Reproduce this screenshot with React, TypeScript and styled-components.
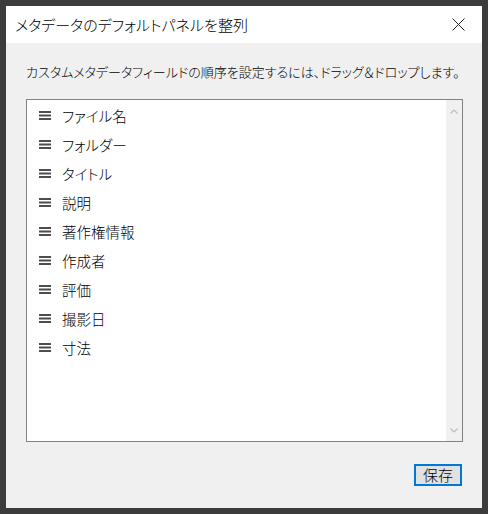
import React from "react";
import styled, { createGlobalStyle } from "styled-components";

const GlobalStyle = createGlobalStyle`
  html, body {
    margin: 0;
    padding: 0;
    background: #3c3c3c;
  }
  * { box-sizing: border-box; }
`;

const Frame = styled.div`
  width: 488px;
  height: 514px;
  padding: 6px;
  background: #3c3c3c;
  font-family: "Noto Sans CJK JP", "Noto Sans", sans-serif;
  font-feature-settings: "palt";
  font-weight: 300;
  color: #000;
`;

const Dialog = styled.div`
  display: flex;
  flex-direction: column;
  height: 100%;
  background: #f0f0f0;
`;

const TitleBar = styled.div`
  display: flex;
  align-items: center;
  height: 37px;
  background: #ffffff;
  padding-left: 9px;
`;

const Title = styled.div`
  flex: 1;
  font-size: 15px;
  line-height: 20px;
`;

const CloseButton = styled.div`
  width: 46px;
  height: 37px;
  display: flex;
  align-items: center;
  justify-content: center;
  padding-right: 2px;
`;

const Body = styled.div`
  flex: 1;
  display: flex;
  flex-direction: column;
  padding: 0 19px 0 20px;
`;

const Description = styled.div`
  margin-top: 20px;
  font-size: 13px;
  line-height: 18px;
  white-space: nowrap;
`;

const ListBox = styled.div`
  margin-top: 18px;
  height: 343px;
  display: flex;
  border: 1px solid #828282;
  background: #ffffff;
`;

const Items = styled.div`
  flex: 1;
  display: flex;
  flex-direction: column;
  padding-top: 1px;
`;

const Row = styled.div`
  display: flex;
  align-items: center;
  gap: 11px;
  height: 29px;
  padding-left: 12px;
  font-size: 14.5px;
`;

const Scrollbar = styled.div`
  width: 16px;
  background: #f0f0f0;
  display: flex;
  flex-direction: column;
  justify-content: space-between;
  align-items: center;
  padding: 9px 0 8px;
`;

const Footer = styled.div`
  display: flex;
  justify-content: flex-end;
  margin-top: 22px;
  padding-right: 1px;
`;

const SaveButton = styled.button`
  width: 48px;
  height: 22px;
  padding: 0;
  border: 2px solid #0078d7;
  background: #e1e1e1;
  font-family: inherit;
  font-feature-settings: "palt";
  font-weight: 300;
  font-size: 15px;
  line-height: 18px;
  color: #000;
  display: flex;
  align-items: center;
  justify-content: center;
`;

const Handle = () => (
  <svg width="12" height="9" viewBox="0 0 12 9">
    <rect x="0" y="0" width="12" height="2" fill="#4d4d4d" />
    <rect x="0" y="3.5" width="12" height="2" fill="#4d4d4d" />
    <rect x="0" y="7" width="12" height="2" fill="#4d4d4d" />
  </svg>
);

const Chevron = ({ up }: { up: boolean }) => (
  <svg width="8" height="5" viewBox="0 0 8 5">
    <path
      d={up ? "M0.5 4.5 L4 1 L7.5 4.5" : "M0.5 0.5 L4 4 L7.5 0.5"}
      fill="none"
      stroke="#bdbdbd"
      strokeWidth="1.2"
    />
  </svg>
);

const items = [
  "ファイル名",
  "フォルダー",
  "タイトル",
  "説明",
  "著作権情報",
  "作成者",
  "評価",
  "撮影日",
  "寸法",
];

export default function App() {
  return (
    <>
      <GlobalStyle />
      <Frame>
        <Dialog>
          <TitleBar>
            <Title>メタデータのデフォルトパネルを整列</Title>
            <CloseButton>
              <svg width="13" height="13" viewBox="0 0 13 13">
                <path d="M0.5 0.5 L12.5 12.5 M12.5 0.5 L0.5 12.5" stroke="#222" strokeWidth="1" fill="none" />
              </svg>
            </CloseButton>
          </TitleBar>
          <Body>
            <Description>
              カスタムメタデータフィールドの順序を設定するには、ドラッグ＆ドロップします。
            </Description>
            <ListBox>
              <Items>
                {items.map((t) => (
                  <Row key={t}>
                    <Handle />
                    <span>{t}</span>
                  </Row>
                ))}
              </Items>
              <Scrollbar>
                <Chevron up />
                <Chevron up={false} />
              </Scrollbar>
            </ListBox>
            <Footer>
              <SaveButton>保存</SaveButton>
            </Footer>
          </Body>
        </Dialog>
      </Frame>
    </>
  );
}
